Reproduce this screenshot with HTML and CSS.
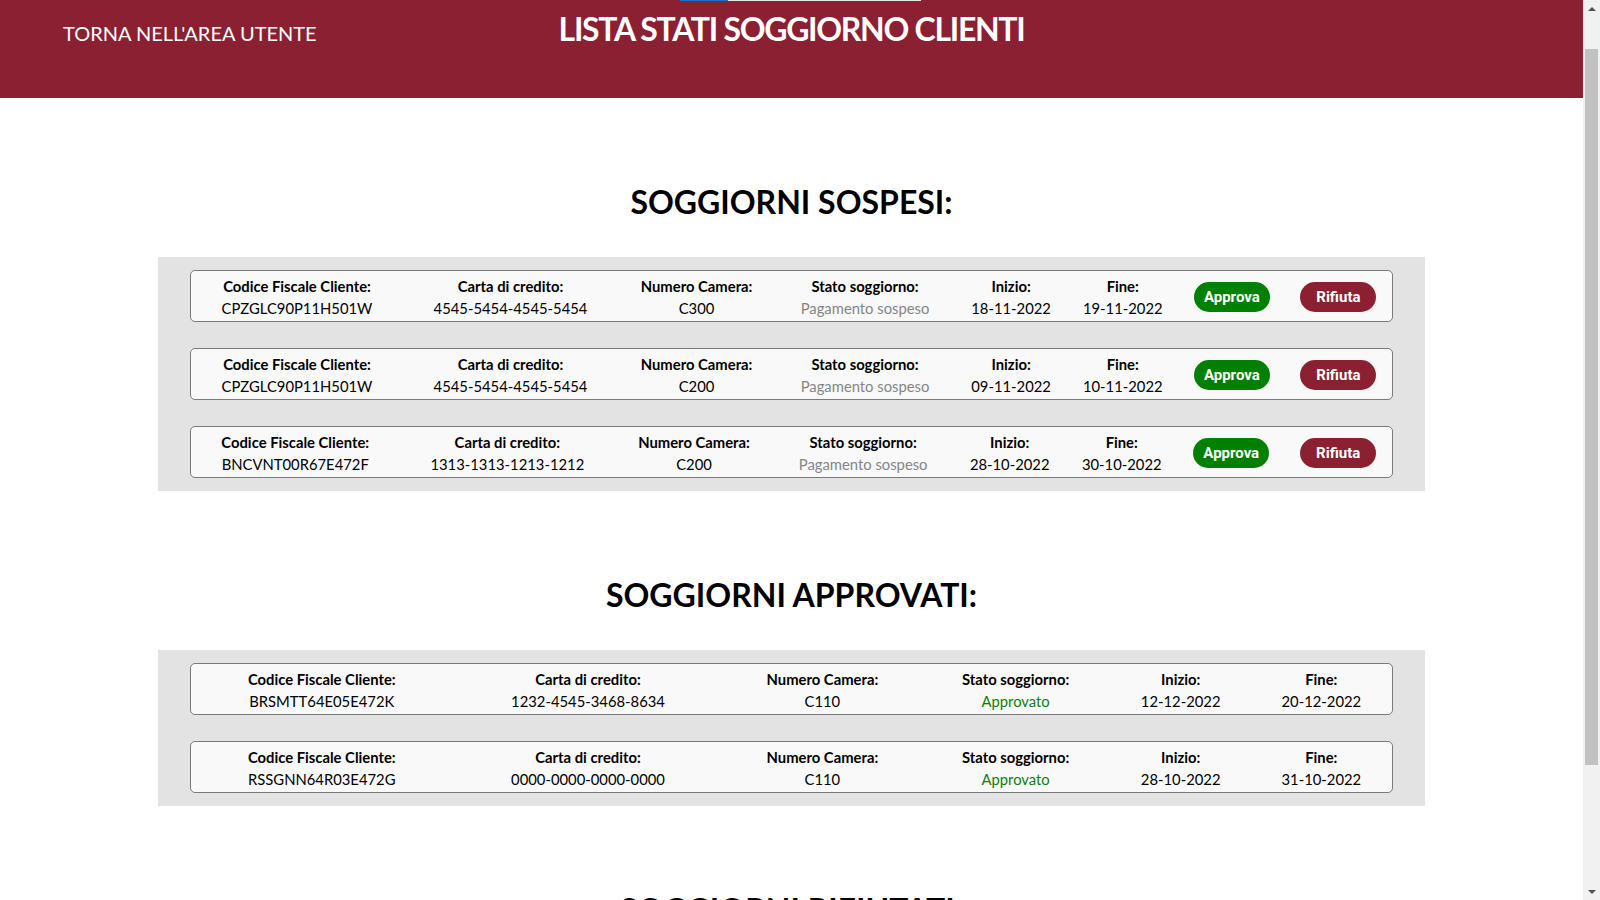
FILE: index.html
```html
<!DOCTYPE html>
<html lang="it">
<head>
<meta charset="utf-8">
<title>Lista stati soggiorno clienti</title>
<link rel="stylesheet" href="styles.css">
</head>
<body>
<header class="topbar">
  <div class="topbar-progress"><span class="topbar-progress-fill"></span></div>
  <a class="back-link" href="#">TORNA NELL'AREA UTENTE</a>
  <h1 class="page-title">LISTA STATI SOGGIORNO CLIENTI</h1>
  <div class="topbar-spacer"></div>
</header>

<main>
  <section class="section">
    <h2 class="section-title">SOGGIORNI SOSPESI:</h2>
    <div class="panel">
      <div class="card">
        <table class="stay">
          <tr>
            <td><div class="lbl">Codice Fiscale Cliente:</div><div class="val">CPZGLC90P11H501W</div></td>
            <td><div class="lbl">Carta di credito:</div><div class="val">4545-5454-4545-5454</div></td>
            <td><div class="lbl">Numero Camera:</div><div class="val">C300</div></td>
            <td><div class="lbl">Stato soggiorno:</div><div class="val pending">Pagamento sospeso</div></td>
            <td><div class="lbl">Inizio:</div><div class="val">18-11-2022</div></td>
            <td><div class="lbl">Fine:</div><div class="val">19-11-2022</div></td>
            <td><button class="btn btn-approve">Approva</button></td>
            <td><button class="btn btn-reject">Rifiuta</button></td>
          </tr>
        </table>
      </div>
      <div class="card">
        <table class="stay">
          <tr>
            <td><div class="lbl">Codice Fiscale Cliente:</div><div class="val">CPZGLC90P11H501W</div></td>
            <td><div class="lbl">Carta di credito:</div><div class="val">4545-5454-4545-5454</div></td>
            <td><div class="lbl">Numero Camera:</div><div class="val">C200</div></td>
            <td><div class="lbl">Stato soggiorno:</div><div class="val pending">Pagamento sospeso</div></td>
            <td><div class="lbl">Inizio:</div><div class="val">09-11-2022</div></td>
            <td><div class="lbl">Fine:</div><div class="val">10-11-2022</div></td>
            <td><button class="btn btn-approve">Approva</button></td>
            <td><button class="btn btn-reject">Rifiuta</button></td>
          </tr>
        </table>
      </div>
      <div class="card">
        <table class="stay">
          <tr>
            <td><div class="lbl">Codice Fiscale Cliente:</div><div class="val">BNCVNT00R67E472F</div></td>
            <td><div class="lbl">Carta di credito:</div><div class="val">1313-1313-1213-1212</div></td>
            <td><div class="lbl">Numero Camera:</div><div class="val">C200</div></td>
            <td><div class="lbl">Stato soggiorno:</div><div class="val pending">Pagamento sospeso</div></td>
            <td><div class="lbl">Inizio:</div><div class="val">28-10-2022</div></td>
            <td><div class="lbl">Fine:</div><div class="val">30-10-2022</div></td>
            <td><button class="btn btn-approve">Approva</button></td>
            <td><button class="btn btn-reject">Rifiuta</button></td>
          </tr>
        </table>
      </div>
    </div>
  </section>

  <section class="section">
    <h2 class="section-title">SOGGIORNI APPROVATI:</h2>
    <div class="panel">
      <div class="card">
        <table class="stay">
          <tr>
            <td><div class="lbl">Codice Fiscale Cliente:</div><div class="val">BRSMTT64E05E472K</div></td>
            <td><div class="lbl">Carta di credito:</div><div class="val">1232-4545-3468-8634</div></td>
            <td><div class="lbl">Numero Camera:</div><div class="val">C110</div></td>
            <td><div class="lbl">Stato soggiorno:</div><div class="val approved">Approvato</div></td>
            <td><div class="lbl">Inizio:</div><div class="val">12-12-2022</div></td>
            <td><div class="lbl">Fine:</div><div class="val">20-12-2022</div></td>
          </tr>
        </table>
      </div>
      <div class="card">
        <table class="stay">
          <tr>
            <td><div class="lbl">Codice Fiscale Cliente:</div><div class="val">RSSGNN64R03E472G</div></td>
            <td><div class="lbl">Carta di credito:</div><div class="val">0000-0000-0000-0000</div></td>
            <td><div class="lbl">Numero Camera:</div><div class="val">C110</div></td>
            <td><div class="lbl">Stato soggiorno:</div><div class="val approved">Approvato</div></td>
            <td><div class="lbl">Inizio:</div><div class="val">28-10-2022</div></td>
            <td><div class="lbl">Fine:</div><div class="val">31-10-2022</div></td>
          </tr>
        </table>
      </div>
    </div>
  </section>

  <section class="section">
    <h2 class="section-title">SOGGIORNI RIFIUTATI:</h2>
    <div class="panel">
      <div class="card">
        <table class="stay">
          <tr>
            <td><div class="lbl">Codice Fiscale Cliente:</div><div class="val">VRDLGU80A01H501Z</div></td>
            <td><div class="lbl">Carta di credito:</div><div class="val">4545-1212-3434-5656</div></td>
            <td><div class="lbl">Numero Camera:</div><div class="val">C100</div></td>
            <td><div class="lbl">Stato soggiorno:</div><div class="val rejected">Rifiutato</div></td>
            <td><div class="lbl">Inizio:</div><div class="val">01-10-2022</div></td>
            <td><div class="lbl">Fine:</div><div class="val">05-10-2022</div></td>
          </tr>
        </table>
      </div>
    </div>
  </section>
</main>

<div class="scrollbar" aria-hidden="true">
  <div class="sb-btn"><span class="sb-arrow sb-arrow-up"></span></div>
  <div class="sb-track"><div class="sb-thumb"></div></div>
  <div class="sb-btn"><span class="sb-arrow sb-arrow-down"></span></div>
</div>
</body>
</html>
```

FILE: styles.css
```css
html, body {
  margin: 0;
  padding: 0;
}

body {
  margin-right: 17px;
  font-family: Lato, "Open Sans", "Liberation Sans", sans-serif;
  color: #000;
  background: #fff;
  padding-bottom: 40px;
}

/* simulated classic scrollbar */
.scrollbar {
  position: fixed;
  top: 0;
  right: 0;
  width: 17px;
  height: 100vh;
  background: #f1f1f1;
  display: flex;
  flex-direction: column;
}

.sb-btn {
  height: 17px;
  flex: none;
  display: flex;
  align-items: center;
  justify-content: center;
}

.sb-arrow {
  width: 0;
  height: 0;
  border-left: 4px solid transparent;
  border-right: 4px solid transparent;
}

.sb-arrow-up {
  border-bottom: 4px solid #505050;
}

.sb-arrow-down {
  border-top: 4px solid #505050;
}

.sb-track {
  flex: 1;
  padding: 32px 2px 0;
}

.sb-thumb {
  height: 716px;
  background: #c1c1c1;
}

.topbar {
  position: relative;
  height: 98px;
  background: #8a2032;
  display: grid;
  grid-template-columns: 1fr auto 1fr;
  align-items: start;
  color: #fff;
}

.topbar-progress {
  position: absolute;
  left: 680px;
  top: 0;
  width: 241px;
  height: 1px;
  background: #e8e8e8;
}

.topbar-progress-fill {
  display: block;
  width: 48px;
  height: 1px;
  background: #1a6fd0;
}

.back-link {
  padding-top: 21px;
  padding-left: 63px;
  color: #fff;
  text-decoration: none;
  font-size: 20px;
  line-height: 24px;
}

.page-title {
  margin: 0;
  padding-top: 10px;
  font-size: 32px;
  line-height: 38px;
  font-weight: 700;
  letter-spacing: -1.3px;
  text-align: center;
}

.section {
  padding-top: 85px;
}

.section-title {
  margin: 0 0 36px;
  font-size: 32px;
  line-height: 38px;
  font-weight: 700;
  text-align: center;
}

.panel {
  width: 80%;
  margin: 0 auto;
  background: #e3e3e3;
  padding: 13px 32px;
  box-sizing: border-box;
  display: flex;
  flex-direction: column;
  gap: 26px;
}

.card {
  background: #f9f9f9;
  border: 1px solid #7a7a7a;
  border-radius: 5px;
  padding: 4px 0 2px;
}

.stay {
  width: 100%;
  border-collapse: collapse;
}

.stay td {
  padding: 0;
  text-align: center;
  vertical-align: middle;
  font-size: 14.8px;
  line-height: 22px;
  white-space: nowrap;
}

.lbl {
  font-weight: 700;
}

.val.pending {
  color: #858585;
}

.val.approved {
  color: #0a800a;
}

.val.rejected {
  color: #8a2032;
}

.btn {
  width: 76px;
  height: 30px;
  padding: 0;
  font-family: Roboto, "Liberation Sans", sans-serif;
  font-weight: 700;
  font-size: 15px;
  color: #fff;
  border: none;
  border-radius: 15px;
  cursor: pointer;
}

.btn-approve {
  background: #008000;
}

.btn-reject {
  background: #8a2032;
}
```
